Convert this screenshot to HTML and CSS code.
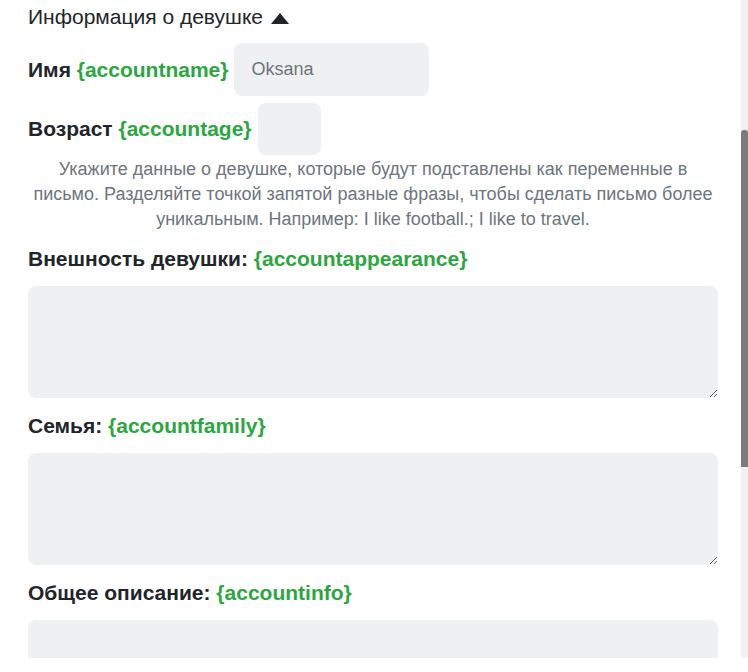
FILE: index.html
```html
<html>
  <head>
    <title>Информация о девушке</title>
    <link rel="stylesheet" href="styles.css">
  </head>

  <body>
    <div class="window">
      <div class="panel">
        <div class="section-toggle">Информация о девушке<span class="arrow"></span></div>

        <div class="inline-field">
          <label for="account-name">Имя <span class="var">{accountname}</span></label>
          <input type="text" id="account-name" class="field name-field" placeholder="Oksana">
        </div>

        <div class="inline-field">
          <label for="account-age">Возраст <span class="var">{accountage}</span></label>
          <input type="text" id="account-age" class="field age-field">
        </div>

        <p class="hint">
          Укажите данные о девушке, которые будут подставлены как переменные в
          письмо. Разделяйте точкой запятой разные фразы, чтобы сделать письмо более
          уникальным. Например: I like football.; I like to travel.
        </p>

        <div class="block-field">
          <label for="account-appearance">Внешность девушки: <span class="var">{accountappearance}</span></label>
          <textarea id="account-appearance" class="field"></textarea>
        </div>

        <div class="block-field">
          <label for="account-family">Семья: <span class="var">{accountfamily}</span></label>
          <textarea id="account-family" class="field"></textarea>
        </div>

        <div class="block-field">
          <label for="account-info">Общее описание: <span class="var">{accountinfo}</span></label>
          <textarea id="account-info" class="field"></textarea>
        </div>
      </div>

      <!-- scrollbar of the panel as it looked in the window -->
      <div class="scrollbar" aria-hidden="true"><div class="scrollbar-thumb"></div></div>
    </div>
  </body>
</html>
```

FILE: styles.css
```css
body {
  margin: 0;
  font-family: "Liberation Sans", Arial, sans-serif;
  color: #212529;
  background: #fff;
}

.window {
  position: relative;
  height: 658px;
  overflow: hidden;
}

.panel {
  padding: 5px 30px 40px 28px;
}

.section-toggle {
  font-size: 21px;
  line-height: 24px;
  margin-bottom: 14px;
}

.arrow {
  display: inline-block;
  margin-left: 8px;
  width: 0;
  height: 0;
  border-left: 9px solid transparent;
  border-right: 9px solid transparent;
  border-bottom: 11px solid #212529;
}

label {
  font-weight: bold;
  font-size: 21px;
  line-height: 24px;
}

.var {
  color: #2ca640;
}

.field {
  border: none;
  border-radius: 8px;
  background: #eff0f2;
  font-family: inherit;
  box-sizing: border-box;
  outline: none;
}

.inline-field {
  display: flex;
  align-items: center;
  gap: 6px;
  margin-bottom: 7px;
}

.name-field {
  width: 195px;
  height: 53px;
  padding: 0 17px;
  font-size: 18px;
}

.name-field::placeholder {
  color: #6c757d;
}

.age-field {
  width: 63px;
  height: 52px;
}

.hint {
  margin: -5px 0 15px;
  text-align: center;
  font-size: 18px;
  line-height: 25px;
  color: #6c757d;
}

.block-field {
  margin-bottom: 16px;
}

.block-field label {
  display: block;
  margin-bottom: 15px;
}

.block-field textarea {
  display: block;
  width: 100%;
  height: 112px;
}

.scrollbar {
  position: absolute;
  top: 0;
  right: 0;
  bottom: 0;
  width: 7px;
  background: #f1f1f1;
  border-radius: 0 0 3px 3px;
}

.scrollbar-thumb {
  margin-top: 130px;
  height: 337px;
  background: #7b7b7b;
  border-radius: 3px 3px 0 0;
}
```
